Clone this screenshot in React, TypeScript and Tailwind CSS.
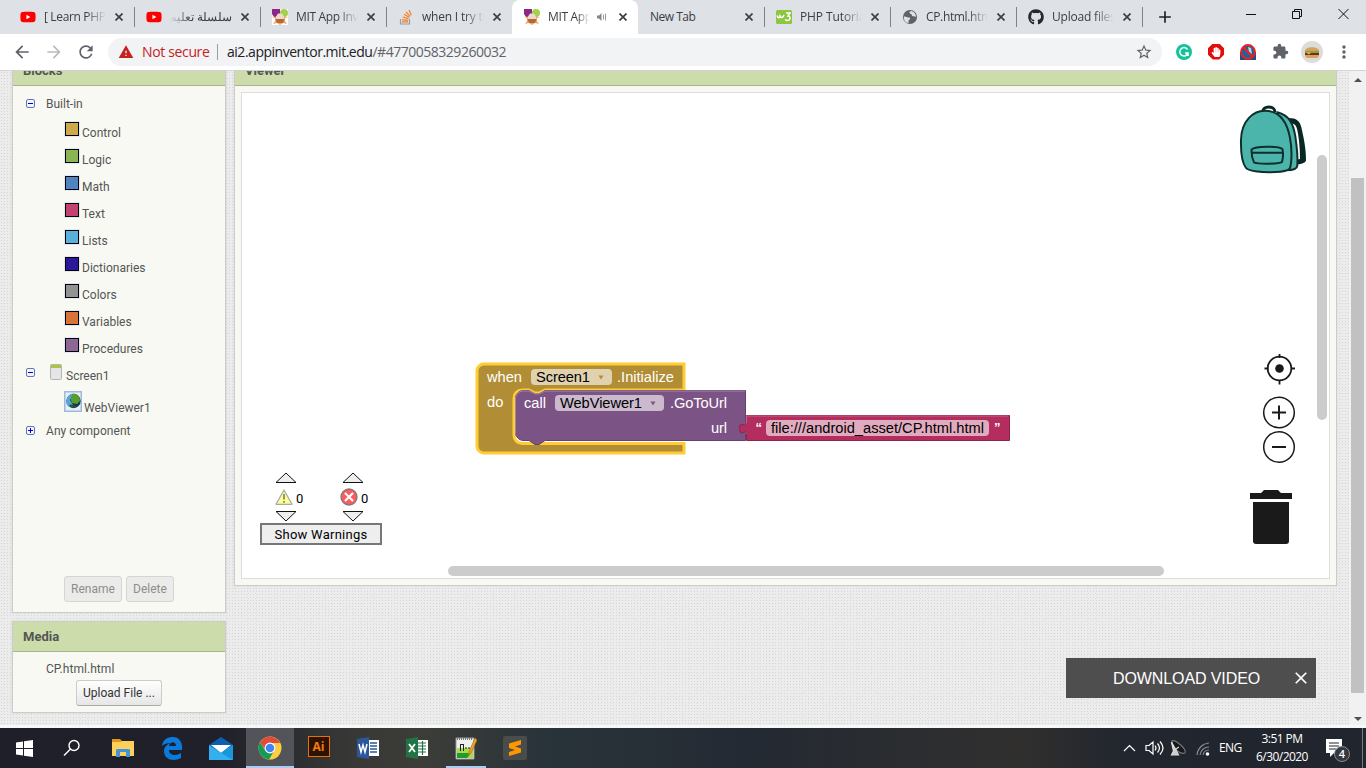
import React from "react";
import { FaYoutube, FaGithub, FaHandPaper } from "react-icons/fa";
import { MdExtension, MdStarBorder, MdMoreVert, MdArrowBack, MdArrowForward, MdRefresh, MdWarning, MdAdd, MdClose } from "react-icons/md";

const ui = "font-['Open_Sans','Noto_Sans',sans-serif]";

function AppInventorIcon() {
  return (
    <svg viewBox="0 0 16 16" className="h-4 w-4">
      <rect width="16" height="16" fill="#fff" />
      <path d="M0 0h8v5L5 8H2L0 5z" fill="#8e2784" />
      <circle cx="12" cy="4" r="4" fill="#a5cf4c" />
      <path d="M0 8l3 1v3L1 15l4-1 3 2 3-2 4 1-2-3V9l3-1-5-.5H5z" fill="#f5a566" />
      <path d="M4 7.500l2-3h4l2 3V10H4z" fill="#eadbd0" />
      <path d="M3.500 10h9l-1.500 4h-6z" fill="#b5683a" />
    </svg>
  );
}

function YoutubeIcon() {
  return <FaYoutube className="h-4 w-4 bg-[linear-gradient(#fff,#fff)] bg-[length:6px_6px] bg-center bg-no-repeat text-[#f00]" />;
}

function StackIcon() {
  return (
    <svg viewBox="0 0 16 16" className="h-4 w-4" fill="none" strokeWidth="1.200">
      <path d="M2.500 10v5h9v-5" stroke="#9a9b9d" />
      <path d="M4 12.800h6M4.100 10.600l6 .7M4.700 8l5.800 1.600M6 5.300l5.200 3M8 3l4.200 4.400M11 1l2.400 5.300" stroke="#f48024" />
    </svg>
  );
}

function W3Icon() {
  return (
    <svg viewBox="0 0 16 16" className="h-4 w-4">
      <rect y="1" width="16" height="14" rx="1.500" fill="#8dc63f" />
      <path d="M1 6.500c1 3 2.500 3 3 .5 1 2.500 3 2 4-1M10 4h4L12 7c3 0 2.500 4.500-.5 4.500-1 0-2-.5-2.200-1.300" fill="none" stroke="#fff" strokeWidth="1.500" />
    </svg>
  );
}

function GlobeIcon() {
  return (
    <svg viewBox="0 0 16 16" className="h-4 w-4">
      <circle cx="8" cy="8" r="7" fill="#5f6368" />
      <path d="M2 7.500c2-.5 3 1 5 1s1 2 0 2.500c-1 .5 0 2-.5 3C3 14 1.500 10.500 2 7.500zM9 2c-1 .5-2 1-1.500 2S10 5 10 6.500 12.500 7 14 8c0-3-2-5.500-5-6z" fill="#dee1e6" />
    </svg>
  );
}

type TabProps = { icon?: React.ReactNode; label: string; active?: boolean; sound?: boolean; rtl?: boolean; sep?: boolean; tracking?: string };

function Tab({ icon, label, active, sound, rtl, sep = true, tracking = "tracking-[-0.35px]" }: TabProps) {
  return (
    <div className={"relative flex h-[34px] w-[126px] shrink-0 items-center pl-3 " + (active ? "rounded-t-lg bg-white" : "")}>
      {icon && <span className="mr-2 w-4 shrink-0">{icon}</span>}
      <span
        dir={rtl ? "rtl" : "ltr"}
        className={
          "overflow-hidden text-[12px] leading-4 whitespace-nowrap text-[#3c4043] " + tracking + " " +
          (sound ? "w-[42px] " : icon ? "w-[62px] " : "w-[86px] ") +
          (!icon ? "" : rtl ? "[mask-image:linear-gradient(to_left,#000_65%,transparent)]" : "[mask-image:linear-gradient(to_right,#000_68%,transparent)]")
        }
      >
        {label}
      </span>
      {sound && (
        <svg viewBox="0 0 10 10" className="ml-[7px] h-[10px] w-[10px]">
          <path d="M0 3.500h2L4.500 1v8L2 6.500H0z" fill="#85878a" />
          <path d="M6.500 2.500v5M8.500 1.500v7" stroke="#9a9c9f" />
        </svg>
      )}
      <svg viewBox="0 0 8 8" className={"h-2 w-2 " + (sound ? "ml-3" : "ml-[9px]")}>
        <path d="M.5.5l7 7M7.500.5l-7 7" stroke="#3c4043" strokeWidth="1.700" />
      </svg>
      {sep && <span className="-mr-px ml-auto h-5 w-px bg-[#808388]" />}
    </div>
  );
}

function TabStrip() {
  return (
    <div className="flex h-[34px] bg-[#dee1e6] pl-2">
      <Tab icon={<YoutubeIcon />} label="[ Learn PHP in" />
      <Tab icon={<YoutubeIcon />} label="سلسلة تعليم" rtl tracking="" />
      <Tab icon={<AppInventorIcon />} label="MIT App Inventor" />
      <Tab icon={<StackIcon />} label="when I try to" sep={false} tracking="tracking-[-0.2px]" />
      <Tab icon={<AppInventorIcon />} label="MIT App Inv" active sound sep={false} />
      <Tab label="New Tab" tracking="tracking-[-0.5px]" />
      <Tab icon={<W3Icon />} label="PHP Tutorial" tracking="tracking-[-0.1px]" />
      <Tab icon={<GlobeIcon />} label="CP.html.html" />
      <Tab icon={<FaGithub className="h-4 w-4 text-[#24292e]" />} label="Upload files to" tracking="tracking-[-0.2px]" />
      <MdAdd className="mt-[7px] ml-[13px] h-5 w-5 text-[#202225]" />
      <svg viewBox="0 0 120 34" className="ml-auto h-[34px] w-[120px]" fill="none" stroke="#111">
        <path d="M0 14.500h10M46.500 11.500h7v7h-7zM48.500 11V9.500h7v7H54M92.500 9l10 10M102.500 9l-10 10" />
      </svg>
    </div>
  );
}

function Toolbar() {
  return (
    <div className="flex h-[37px] items-center border-b border-[#d3d5d8] bg-white pb-px text-[#5f6368]">
      <MdArrowBack className="ml-[12px] h-5 w-5" />
      <MdArrowForward className="ml-[12px] h-5 w-5 text-[#b9bbbe]" />
      <MdRefresh className="ml-[12px] h-5 w-5" />
      <div className="ml-[12px] flex h-7 w-[1054px] items-center rounded-full bg-[#f1f3f4] pl-[10px]">
        <MdWarning className="h-4 w-4 text-[#c5221f]" />
        <span className="ml-2 w-[67px] text-[14px] leading-5 tracking-[-0.35px] whitespace-nowrap text-[#c5221f]">Not secure</span>
        <span className="mr-[9px] ml-[8px] h-4 w-px bg-[#9a9da1]" />
        <span className="text-[14px] leading-5 whitespace-nowrap tracking-[-0.48px]">
          <span className="text-[#202124]">ai2.appinventor.mit.edu</span>/#4770058329260032
        </span>
        <MdStarBorder className="mr-[9px] ml-auto h-[18px] w-[18px]" />
      </div>
      <svg viewBox="0 0 16 16" className="ml-[14px] h-4 w-4">
        <circle cx="8" cy="8" r="8" fill="#15c39a" />
        <path d="M11.500 5.500A4.200 4.200 0 1 0 12 9H9M12 9v3" fill="none" stroke="#fff" strokeWidth="1.500" />
      </svg>
      <span className="ml-4 flex h-4 w-4 items-center justify-center bg-[#e40d0d] [clip-path:polygon(30%_0,70%_0,100%_30%,100%_70%,70%_100%,30%_100%,0_70%,0_30%)]">
        <FaHandPaper className="h-[10px] w-[10px] text-white" />
      </span>
      <svg viewBox="0 0 16 16" className="ml-4 h-4 w-4">
        <rect y="8" width="16" height="8" fill="#1d4f86" />
        <circle cx="8" cy="8" r="7" fill="#2a5f95" />
        <path d="M8 3l3 1 1 6-3-2z" fill="#b9d5e8" />
        <circle cx="8" cy="8" r="7" fill="none" stroke="#ef2020" strokeWidth="1.800" />
        <path d="M3 3l10 10" stroke="#ef2020" strokeWidth="1.800" />
      </svg>
      <MdExtension className="ml-4 h-[17px] w-[17px]" />
      <svg viewBox="0 0 22 22" className="ml-[12px] h-[22px] w-[22px]">
        <circle cx="11" cy="11" r="11" fill="#dcdcdc" />
        <path d="M4 10c0-5 14-5 14 0z" fill="#d9a259" />
        <path d="M4 10h14v2H4z" fill="#8f9a4d" />
        <path d="M4 12h14v2H4z" fill="#6a3421" />
        <path d="M5 11.500h5l-2 2z" fill="#f2c13c" />
        <path d="M4 14h14c0 2-1 3-3 3H7c-2 0-3-1-3-3z" fill="#d9a259" />
      </svg>
      <MdMoreVert className="ml-[11px] h-5 w-5" />
    </div>
  );
}

const drawers = [
  { name: "Control", color: "bg-[#ccaa4a]" },
  { name: "Logic", color: "bg-[#8ab554]" },
  { name: "Math", color: "bg-[#4f84c1]" },
  { name: "Text", color: "bg-[#c3426f]" },
  { name: "Lists", color: "bg-[#57b2db]" },
  { name: "Dictionaries", color: "bg-[#2d1799]" },
  { name: "Colors", color: "bg-[#929292]" },
  { name: "Variables", color: "bg-[#d97439]" },
  { name: "Procedures", color: "bg-[#8e6796]" },
];

function Toggle({ plus }: { plus?: boolean }) {
  return (
    <svg viewBox="0 0 9 9" className="block h-[9px] w-[9px] shrink-0">
      <rect x=".5" y=".5" width="8" height="8" rx="1.500" fill="#f3f5fb" stroke="#6376bb" />
      <path d={plus ? "M2 4.500h5M4.500 2v5" : "M2 4.500h5"} stroke="#0000d5" />
    </svg>
  );
}

function BlocksPanel() {
  return (
    <section className="flex h-[542px] flex-col overflow-hidden border border-t-0 border-[#ccc] bg-[#f8f9f3] text-[12px] text-[#555] shadow-[0_0_1px_#bbb]">
      <header className="flex h-[15px] shrink-0 items-end border-b border-[#abb393] bg-[#ccdcaa] pl-[10px]">
        <span className="-mt-2 mb-[7px] text-[13px] leading-[15px] font-bold">Blocks</span>
      </header>
      <div className="mt-[3px] flex h-[28px] items-center pl-[13px]">
        <Toggle />
        <span className="mt-[2px] ml-[11px]">Built-in</span>
      </div>
      <div className="mt-[2px]">
        {drawers.map((d) => (
          <div key={d.name} className="flex h-[27px] items-center pl-[52px]">
            <span className={"mb-[7px] h-[14px] w-[14px] border border-black outline outline-[#e3e8f5] " + d.color} />
            <span className="ml-[3px]">{d.name}</span>
          </div>
        ))}
      </div>
      <div className="flex h-[27px] items-center pl-[13px]">
        <span className="mb-[7px]"><Toggle /></span>
        <svg viewBox="0 0 12 16" className="mb-[7px] ml-[15px] h-4 w-3">
          <rect x=".5" y=".5" width="11" height="15" rx="1" fill="#e5e5e5" stroke="#b5b5b5" />
          <path d="M1 1h10v3H1z" fill="#a8c63f" />
        </svg>
        <span className="ml-1">Screen1</span>
      </div>
      <div className="flex h-[28px] items-center pl-[51px]">
        <svg viewBox="0 0 18 21" className="mb-[3px] h-[21px] w-[18px]">
          <rect x=".75" y=".75" width="16.500" height="19.500" fill="#e9eff9" stroke="#9fb8dc" strokeWidth="1.500" />
          <circle cx="9.500" cy="10" r="7.200" fill="#16375c" />
          <path d="M2.300 10a7 7 0 0 1 7-7.200L6 9l3 5-4 2c-2-1.500-2.700-3.500-2.700-6z" fill="#58a5dc" />
          <path d="M8.500 3c5-1 7.500 3 7.500 7l-3 3-5-1-1.500-4z" fill="#579f2c" />
          <path d="M5 14c3-1 5 0 7 2-2 1-5 1-7-2z" fill="#2b5b28" />
        </svg>
        <span className="mt-[9px] ml-[2px]">WebViewer1</span>
      </div>
      <div className="flex h-[27px] items-center pl-[13px]">
        <Toggle plus />
        <span className="ml-[11px] tracking-[0.05px]">Any component</span>
      </div>
      <div className="mt-auto mb-[10px] flex gap-1 pl-[51px] text-[#8e8e8e]">
        <button className="h-[26px] w-[58px] rounded-[3px] border border-[#d5d5d3] bg-[#ebebe9]">Rename</button>
        <button className="h-[26px] w-[48px] rounded-[3px] border border-[#d5d5d3] bg-[#ebebe9]">Delete</button>
      </div>
    </section>
  );
}

function MediaPanel() {
  return (
    <section className="mt-2 h-[92px] border border-[#ccc] bg-[#f8f9f3] text-[12px] text-[#555] shadow-[0_0_1px_#bbb]">
      <header className="flex h-[30px] items-center border-b border-[#abb393] bg-[#ccdcaa] pl-[10px] text-[13px] font-bold">Media</header>
      <p className="mt-2 pl-[33px] leading-[18px] tracking-[0.05px]">CP.html.html</p>
      <button className="mt-[2px] ml-[63px] h-[26px] w-[86px] rounded-[3px] border border-[#ccc] border-b-[#aaa] bg-linear-to-b from-white to-[#e6e6e6] text-[#333]">
        Upload File ...
      </button>
    </section>
  );
}

function BlockStack() {
  return (
    <svg
      viewBox="470 356 550 104"
      className="absolute top-[263px] left-[228px] h-[104px] w-[550px] font-['Liberation_Sans',Arial,sans-serif] text-[14.67px]"
    >
      <path
        d="M684 364H484a7 7 0 0 0-7 7v75a7 7 0 0 0 7 7h200v-9.500H522a8 8 0 0 1-8-8V398a8 8 0 0 1 8-8h7l6 3h4l6-3h139z"
        fill="#b18e35" stroke="#fc3" strokeWidth="3"
      />
      <path
        d="M745.500 390.500H545l-6 3.500h-4l-6-3.500h-6a8 8 0 0 0-7.500 8v34a8 8 0 0 0 7.500 8h6l6 4h4l6-4h200.500v-7c0-6-6 5-6-5s6 2 6-5z"
        fill="#7c5385" stroke="#63426a"
      />
      <path d="M515.500 434v-35a8 8 0 0 1 7.500-8h6l6 3h4l6-3h200" fill="none" stroke="#a386aa" />
      <path d="M1009.500 415.500h-263v8c0 5-7-4-7 5s7 0 7 5v7h263z" fill="#b32d5e" stroke="#8f244b" />
      <path d="M746.500 423v-7h262" fill="none" stroke="#c8628a" />
      <rect x="531" y="369" width="81" height="16" rx="4" fill="#e0d2ae" />
      <rect x="555" y="395" width="109" height="16" rx="4" fill="#cbbace" />
      <rect x="766" y="420" width="223" height="16" rx="4" fill="#e1abbf" />
      <g fill="#fff">
        <text x="487" y="382" textLength="35">when</text>
        <text x="617" y="382" textLength="57">.Initialize</text>
        <text x="487" y="407">do</text>
        <text x="524" y="408" textLength="22">call</text>
        <text x="670" y="408" textLength="57">.GoToUrl</text>
        <text x="711" y="433" textLength="16">url</text>
        <text x="755.5" y="432" fontSize="13" fontWeight="bold">“</text>
        <text x="994" y="432" fontSize="13" fontWeight="bold">”</text>
      </g>
      <g fill="#000">
        <text x="536" y="382" textLength="54">Screen1</text>
        <text x="560" y="408" textLength="82">WebViewer1</text>
        <text x="771" y="433" textLength="213">file:///android_asset/CP.html.html</text>
      </g>
      <path d="M598.500 375.500h5l-2.500 4z" fill="#b18e35" />
      <path d="M650.500 401.500h5l-2.500 4z" fill="#7c5385" />
    </svg>
  );
}

function Backpack() {
  return (
    <svg viewBox="48 42 228 216" className="absolute top-[11px] left-[994px] h-[72px] w-[76px]" strokeLinejoin="round">
      <path d="M128 66c0-20 36-20 37 0" fill="none" stroke="#0a2823" strokeWidth="9" />
      <path d="M206 84c24 0 34 10 38 28 6 28 14 60 14 98 0 8-12 12-26 13l-2-14 10-2c0-36-4-74-10-94-4-10-10-14-22-12z" fill="#0a2823" />
      <path d="M172 67c38 10 48 36 54 72 5 34 8 62 6 88-1 12-18 14-34 14z" fill="#4cb5ab" stroke="#0e2f2c" strokeWidth="6" />
      <path d="M134 62c-32 0-70 28-71 88-1 42 4 70 15 84 8 10 52 14 88 12 20-1 36-4 43-10 6-12 8-56 1-92-9-50-30-82-76-82z" fill="#4cb5ab" stroke="#0e2f2c" strokeWidth="6" />
      <path d="M95 178c10-10 82-11 92-1 3 10 2 27-1 39-8 6-72 7-84 1-5-10-8-28-7-39zM96 188h91" fill="none" stroke="#0e2f2c" strokeWidth="6" />
    </svg>
  );
}

function CanvasControls() {
  return (
    <svg viewBox="0 0 50 200" className="absolute top-[257px] left-[1006px] h-[200px] w-[50px]" fill="none" stroke="#1a1a1a">
      <circle cx="31.500" cy="18.500" r="11.800" strokeWidth="1.800" />
      <circle cx="31.500" cy="18.500" r="4.300" fill="#1a1a1a" stroke="none" />
      <path d="M31.500 4v4M31.500 30v4.500M16.500 18.500h4M43 18.500h4" strokeWidth="1.800" />
      <circle cx="31" cy="62.500" r="15.300" strokeWidth="1.500" />
      <path d="M24 62.500h14M31 55.500v14" strokeWidth="2" />
      <circle cx="31" cy="97" r="15.300" strokeWidth="1.500" />
      <path d="M24 97h14" strokeWidth="2" />
      <g fill="#1a1a1a" stroke="none">
        <path d="M2 143h11l3-3h14l3 3h11v6H2z" />
        <path d="M5 152h36v39q0 3-3 3H8q-3 0-3-3z" />
      </g>
    </svg>
  );
}

function Arrow({ down }: { down?: boolean }) {
  return (
    <svg viewBox="0 0 22 12" className="h-3 w-[22px]">
      <path d={down ? "M1 1.500h20l-10 9.500z" : "M1 10.500h20L11 1z"} fill="#eee" stroke="#111" />
    </svg>
  );
}

function WarningIndicator() {
  return (
    <div className="absolute top-[379px] left-[18px] w-[122px] font-['Roboto',sans-serif] text-[13px] text-black">
      <div className="flex pl-[15px]">
        <div className="w-[67px]">
          <Arrow />
          <div className="flex h-[26px] items-center">
            <svg viewBox="0 0 18 16" className="mb-px h-4 w-[18px]">
              <path d="M9 1l8 14.300H1z" fill="#fdfd95" stroke="#aaa" strokeWidth="1.300" strokeLinejoin="round" />
              <path d="M9 5v5.500M9 12v1.700" stroke="#8b8b6b" strokeWidth="1.800" />
            </svg>
            <span className="mt-[3px] ml-[3px]">0</span>
          </div>
          <Arrow down />
        </div>
        <div>
          <Arrow />
          <div className="-ml-[2px] flex h-[26px] items-center">
            <svg viewBox="0 0 18 18" className="mb-px h-[18px] w-[18px]">
              <circle cx="9" cy="9" r="8" fill="#fb5c60" stroke="#827878" strokeWidth="1.300" />
              <path d="M5 5l8 8M13 5l-8 8" stroke="#fff" strokeWidth="2.200" />
            </svg>
            <span className="mt-[3px] ml-[3px]">0</span>
          </div>
          <Arrow down />
        </div>
      </div>
      <button className="mt-px block h-[22px] w-[122px] border-2 border-[#777] bg-[#eee] pt-px leading-[18px] tracking-[0.25px]">Show Warnings</button>
    </div>
  );
}

function ViewerPanel() {
  return (
    <section className="ml-2 h-[515px] w-[1103px] overflow-hidden border border-t-0 border-[#ccc] bg-[#f8f9f3] text-[#555] shadow-[0_0_1px_#bbb]">
      <header className="flex h-[15px] items-end border-b border-[#abb393] bg-[#ccdcaa] pl-[10px]">
        <span className="mb-[7px] text-[13px] leading-[15px] font-bold">Viewer</span>
      </header>
      <div className="relative mt-[6px] ml-[6px] h-[487px] w-[1089px] border border-[#ddd] bg-white">
        <BlockStack />
        <Backpack />
        <CanvasControls />
        <WarningIndicator />
        <span className="absolute top-[62px] left-[1075px] h-[265px] w-[10px] rounded-full bg-[#ccc]" />
        <span className="absolute top-[473px] left-[206px] h-[10px] w-[716px] rounded-full bg-[#ccc]" />
      </div>
    </section>
  );
}

function PageScrollbar() {
  return (
    <div className="ml-auto flex w-[17px] flex-col items-center bg-[#f1f1f1]">
      <span className="mt-[7px] h-0 w-0 border-x-4 border-b-4 border-x-transparent border-b-[#505050]" />
      <span className="mt-[96px] h-[515px] w-[13px] bg-[#c1c1c1]" />
      <span className="mt-auto mb-1 h-0 w-0 border-x-4 border-t-4 border-x-transparent border-t-[#505050]" />
    </div>
  );
}

const officePage = "M12 3h10v16H12z";

const taskIcons = [
  <svg viewBox="0 0 17 17" className="h-[17px] w-[17px]" fill="#fff"><path d="M0 2.400L7 1.500V8H0zM8 1.300L17 0v8H8zM0 9h7v6.500l-7-1zM8 9h9v8l-9-1.300z" /></svg>,
  <svg viewBox="0 0 18 18" className="mr-[3px] h-[18px] w-[18px]" fill="none" stroke="#fff" strokeWidth="1.400"><circle cx="11" cy="6.500" r="5" /><path d="M7.500 10L1 16.500" /></svg>,
  <svg viewBox="0 0 22 20" className="h-5 w-[22px]"><path d="M0 1h8l2 2v4H0z" fill="#dc9b17" /><path d="M0 4h9l1-1h12v15H0z" fill="#fdd05c" /><path d="M4 19v-7l1-1h12l1 1v7h-4v-5H8v5z" fill="#3f95d6" /></svg>,
  <svg viewBox="0 0 22 24" className="h-6 w-[22px]"><path d="M1 10C2 3 7 1 12 1c6 0 9 5 9 10v3H8c0 6 8 6 12 3v5c-7 4-17 2-17-7 0-4 3-6 6-8-3 0-6 1-8 3zm7 0h7c0-5-6-5-7 0z" fill="#0a7bdc" /></svg>,
  <svg viewBox="0 0 24 23" className="h-[23px] w-6"><path d="M0 8l12-8 12 8v14H0z" fill="#0b61af" /><path d="M2 8h20l-10 8z" fill="#fff" /><path d="M0 8l12 8L24 8v15H0z" fill="#33b0ee" /><path d="M12 16l12-8v15z" fill="#1897dd" /></svg>,
  <svg viewBox="0 0 24 24" className="h-6 w-6"><circle cx="12" cy="12" r="11.500" fill="#ffcd40" /><path d="M2 6.300a11.500 11.500 0 0 1 20.200.7H12a5 5 0 0 0-5 6z" fill="#e14a3d" /><path d="M2 6.300A11.500 11.500 0 0 0 11 23.500l5-8.500c-3 3-7 2-9-1z" fill="#159b58" /><circle cx="12" cy="12" r="5.400" fill="#fff" /><circle cx="12" cy="12" r="4.300" fill="#4286f5" /></svg>,
  <span className="mb-[3px] flex h-[21px] w-[22px] items-center justify-center border border-[#eb6f06] bg-[#2c1402] font-['Open_Sans',sans-serif] text-[12px] leading-none font-bold text-[#f77b0b]">Ai</span>,
  <svg viewBox="0 0 22 22" className="h-[22px] w-[22px]"><path d={officePage} fill="#fff" /><path d="M13 6h7M13 9h7M13 12h7M13 15h7" stroke="#2b579a" strokeWidth="1.500" /><path d="M0 2l12-2v22L0 20z" fill="#2b579a" /><path d="M2 7l2 8 2-7 2 7 2-8" fill="none" stroke="#fff" strokeWidth="1.500" /></svg>,
  <svg viewBox="0 0 22 22" className="h-[22px] w-[22px]"><path d={officePage} fill="#fff" /><path d="M12 6h8M12 9h8M12 12h8M12 15h8M16.500 4v14" stroke="#217346" strokeWidth="1.200" /><path d="M0 2l12-2v22L0 20z" fill="#217346" /><path d="M3 7l6 8M9 7l-6 8" stroke="#fff" strokeWidth="1.800" /></svg>,
  <svg viewBox="0 0 22 24" className="h-6 w-[22px]"><path d="M1 2h18v21H1z" fill="#eef1eb" stroke="#999" /><path d="M2 12h16v10H2z" fill="#a6dc45" /><path d="M2 17h14l-4 5H2z" fill="#239a2d" /><path d="M2 3h16" stroke="#777" strokeWidth="2" strokeDasharray="1 1" /><path d="M5.500 8v7M8.500 8v7M5.500 8.500h3M10 12h2M13 12h2" stroke="#222" /><path d="M20 2l-6 14-1 3 3-2 6-13z" fill="#f0a52b" stroke="#b36716" strokeWidth=".7" /></svg>,
  <svg viewBox="0 0 24 24" className="h-6 w-6"><rect width="24" height="24" rx="2" fill="#4a4b4b" /><path d="M6 7.500L18 4v4.500l-6 2 6 2v4L6 20v-4l6-2-6-2z" fill="#ff9800" /></svg>,
];

function Taskbar() {
  return (
    <footer className="flex h-10 bg-[linear-gradient(90deg,#1e1f29_0%,#1f202a_16%,#383936_26%,#3c3d38_31%,#29333a_40%,#242a33_55%,#302f2e_75%,#22262e_82%,#20252e_100%)] text-white">
      {taskIcons.map((icon, i) => (
        <div
          key={i}
          className={
            "relative flex shrink-0 items-center justify-center " +
            (i === 5 ? "ml-px w-12 border-b-2 border-[#a8cdf5] bg-[#52545a] pt-[2px]" : "w-[49px]")
          }
        >
          {icon}
          {i === 9 && <span className="absolute bottom-0 left-[5px] h-[2px] w-10 bg-[#a8cdf5]" />}
        </div>
      ))}
      <div className="ml-auto flex items-center">
        <svg viewBox="0 0 90 24" className="h-6 w-[90px]" fill="none" stroke="#fff" strokeWidth="1.200">
          <path d="M1 15l5.500-5.500L12 15M23 9.500h3l4-3.500v12l-4-3.500h-3zM32 9.500q2 2.500 0 5M34.500 7.500q4 4.500 0 9M37 5.500q6 6.500 0 13" />
          <path d="M49 5c3-2 15 8 13 12-4 2-15-6-13-12z" fill="#15191d" stroke="#777" />
          <path d="M48.500 6l2 9-2 4h7l-2-4zM53 13l3-2" fill="#ccc" stroke="#ddd" />
          <g stroke="#858a8f"><path d="M74 19A13 13 0 0 1 86 7M77 19a9 9 0 0 1 9-8M80 19a6 6 0 0 1 6-5" /></g>
          <circle cx="84.500" cy="18" r="1.800" fill="#fff" stroke="none" />
        </svg>
        <span className="ml-[6px] w-[24px] text-[12px] tracking-[-0.6px]">ENG</span>
        <div className="ml-[11px] w-[56px] text-center text-[12px] leading-[18px] tracking-[-0.55px] whitespace-nowrap">
          <div>3:51 PM</div>
          <div>6/30/2020</div>
        </div>
        <svg viewBox="0 0 26 26" className="mt-1 ml-[15px] h-[26px] w-[26px]">
          <path d="M1 2h16v14H9l-4 4v-4H1z" fill="#fff" />
          <path d="M4 6h10M4 9h10M4 12h7" stroke="#20252e" />
          <circle cx="17" cy="17" r="7.500" fill="#34383f" stroke="#888b90" />
          <text x="17" y="21" textAnchor="middle" fill="#fff" fontSize="11" fontWeight="600">4</text>
        </svg>
        <span className="ml-[11px] h-10 w-px bg-[#777a80]" />
        <span className="w-[3px]" />
      </div>
    </footer>
  );
}

export default function App() {
  return (
    <div className={"relative flex h-[768px] w-[1366px] flex-col overflow-hidden bg-white " + ui}>
      <TabStrip />
      <Toolbar />
      <main className="flex h-[657px] border-b-3 border-[#f7f7f7] bg-[#ececec] bg-[radial-gradient(circle,#d6d6d6_0.6px,transparent_0.9px),radial-gradient(circle,#dedede_0.6px,transparent_0.9px)] bg-[length:3px_3px,7px_5px] font-['Roboto',sans-serif]">
        <div className="ml-3 w-[214px]">
          <BlocksPanel />
          <MediaPanel />
        </div>
        <ViewerPanel />
        <PageScrollbar />
      </main>
      <Taskbar />
      <div className="absolute top-[658px] left-[1066px] flex h-10 w-[250px] items-center bg-[#4e4e4e] pt-[2px] pl-[47px] font-['Liberation_Sans',Arial,sans-serif] text-[16px] text-white">
        <span className="w-[147px] whitespace-nowrap tracking-[-0.1px]">DOWNLOAD VIDEO</span>
        <MdClose className="mb-[2px] ml-[31px] h-5 w-5" />
      </div>
    </div>
  );
}
